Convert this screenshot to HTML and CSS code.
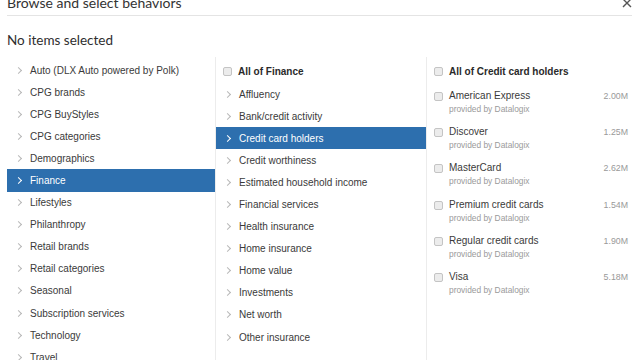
FILE: index.html
```html
<!DOCTYPE html>
<html>
<head>
    <title>Browse and select behaviors</title>
    <link rel="stylesheet" href="styles.css">
</head>
<body>
    <div class="modal">
        <div class="modal-header">
            <h2>Browse and select behaviors</h2>
            <span class="close">
                <svg width="10" height="10" viewBox="0 0 10 10"><path d="M1 1 L9 9 M9 1 L1 9" stroke="#555" stroke-width="1.4" fill="none"/></svg>
            </span>
        </div>
        <div class="selection">No items selected</div>

        <div class="browser">
            <ul class="col">
                <li class="row"><span class="chev"></span>Auto (DLX Auto powered by Polk)</li>
                <li class="row"><span class="chev"></span>CPG brands</li>
                <li class="row"><span class="chev"></span>CPG BuyStyles</li>
                <li class="row"><span class="chev"></span>CPG categories</li>
                <li class="row"><span class="chev"></span>Demographics</li>
                <li class="row active"><span class="chev"></span>Finance</li>
                <li class="row"><span class="chev"></span>Lifestyles</li>
                <li class="row"><span class="chev"></span>Philanthropy</li>
                <li class="row"><span class="chev"></span>Retail brands</li>
                <li class="row"><span class="chev"></span>Retail categories</li>
                <li class="row"><span class="chev"></span>Seasonal</li>
                <li class="row"><span class="chev"></span>Subscription services</li>
                <li class="row"><span class="chev"></span>Technology</li>
                <li class="row"><span class="chev"></span>Travel</li>
            </ul>

            <ul class="col">
                <li class="all"><span class="check"></span>All of Finance</li>
                <li class="row"><span class="chev"></span>Affluency</li>
                <li class="row"><span class="chev"></span>Bank/credit activity</li>
                <li class="row active"><span class="chev"></span>Credit card holders</li>
                <li class="row"><span class="chev"></span>Credit worthiness</li>
                <li class="row"><span class="chev"></span>Estimated household income</li>
                <li class="row"><span class="chev"></span>Financial services</li>
                <li class="row"><span class="chev"></span>Health insurance</li>
                <li class="row"><span class="chev"></span>Home insurance</li>
                <li class="row"><span class="chev"></span>Home value</li>
                <li class="row"><span class="chev"></span>Investments</li>
                <li class="row"><span class="chev"></span>Net worth</li>
                <li class="row"><span class="chev"></span>Other insurance</li>
            </ul>

            <ul class="col last">
                <li class="all"><span class="check"></span>All of Credit card holders</li>
                <li class="segment">
                    <span class="check"></span>
                    <div class="seg-info">
                        <div class="seg-name">American Express</div>
                        <div class="seg-source">provided by Datalogix</div>
                    </div>
                    <span class="seg-size">2.00M</span>
                </li>
                <li class="segment">
                    <span class="check"></span>
                    <div class="seg-info">
                        <div class="seg-name">Discover</div>
                        <div class="seg-source">provided by Datalogix</div>
                    </div>
                    <span class="seg-size">1.25M</span>
                </li>
                <li class="segment">
                    <span class="check"></span>
                    <div class="seg-info">
                        <div class="seg-name">MasterCard</div>
                        <div class="seg-source">provided by Datalogix</div>
                    </div>
                    <span class="seg-size">2.62M</span>
                </li>
                <li class="segment">
                    <span class="check"></span>
                    <div class="seg-info">
                        <div class="seg-name">Premium credit cards</div>
                        <div class="seg-source">provided by Datalogix</div>
                    </div>
                    <span class="seg-size">1.54M</span>
                </li>
                <li class="segment">
                    <span class="check"></span>
                    <div class="seg-info">
                        <div class="seg-name">Regular credit cards</div>
                        <div class="seg-source">provided by Datalogix</div>
                    </div>
                    <span class="seg-size">1.90M</span>
                </li>
                <li class="segment">
                    <span class="check"></span>
                    <div class="seg-info">
                        <div class="seg-name">Visa</div>
                        <div class="seg-source">provided by Datalogix</div>
                    </div>
                    <span class="seg-size">5.18M</span>
                </li>
            </ul>
        </div>
    </div>
</body>
</html>
```

FILE: styles.css
```css
html, body {
    margin: 0;
    height: 100%;
    overflow: hidden;
    background-color: #fff;
}

body {
    font-family: "Liberation Sans", Arial, sans-serif;
    color: #3a3a3a;
}

.modal {
    padding: 0 8px 0 7px;
}

.modal-header {
    margin-top: -10px;
    height: 25px;
    border-bottom: 1px solid #e4e4e4;
    display: flex;
    align-items: center;
    justify-content: space-between;
}

.modal-header h2 {
    margin: 0;
    font-family: Lato, "Liberation Sans", sans-serif;
    font-size: 14px;
    font-weight: normal;
    color: #333;
}

.close {
    display: flex;
    margin-top: 1px;
}

.selection {
    font-family: Lato, "Liberation Sans", sans-serif;
    font-size: 13.5px;
    line-height: 16px;
    color: #2e2e2e;
    padding: 16px 0 9px;
}

.browser {
    display: grid;
    grid-template-columns: 209px 211px 1fr;
    height: 320px;
}

.col {
    list-style: none;
    margin: 0;
    padding: 2px 0 0;
    border-right: 1px solid #ececec;
}

.col.last {
    border-right: none;
}

.row {
    height: 22.1px;
    display: flex;
    align-items: center;
    font-size: 10px;
    color: #3a3a3a;
    padding-left: 10px;
}

.row.active {
    background-color: #2d6fae;
    color: #fff;
}

.chev {
    width: 4px;
    height: 4px;
    border-right: 1px solid #b8b8b8;
    border-top: 1px solid #b8b8b8;
    transform: rotate(45deg);
    margin-right: 9px;
    margin-left: -1px;
}

.row.active .chev {
    border-color: #fff;
}

.all {
    height: 24px;
    display: flex;
    align-items: center;
    padding-left: 7px;
    font-size: 10px;
    font-weight: bold;
    color: #2a2a2a;
}

.check {
    width: 7px;
    height: 7px;
    border: 1px solid #c4c4c4;
    border-radius: 2px;
    background-color: #ececec;
    margin-right: 6px;
    flex-shrink: 0;
}

.segment {
    display: flex;
    align-items: flex-start;
    padding: 6px 4px 4px 7px;
    height: 26.2px;
}

.segment .check {
    margin-top: 3px;
}

.seg-info {
    flex: 1;
}

.seg-name {
    font-size: 10px;
    line-height: 14px;
    color: #3a3a3a;
}

.seg-source {
    font-size: 8.4px;
    line-height: 12px;
    color: #9a9a9a;
}

.seg-size {
    font-size: 8.8px;
    line-height: 14px;
    color: #999;
}
```
